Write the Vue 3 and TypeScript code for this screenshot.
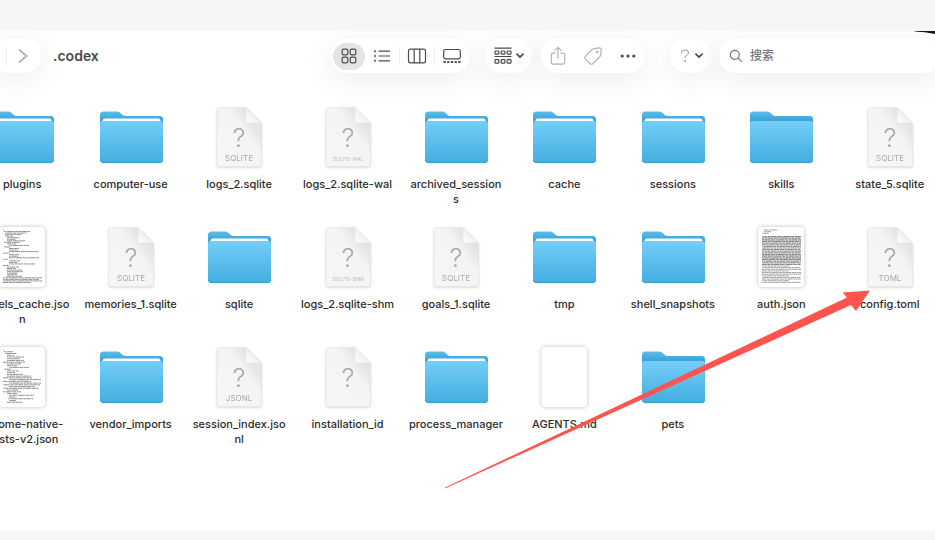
<script setup lang="ts">
import { ref } from 'vue'

type Kind = 'folder' | 'empty-folder' | 'unknown' | 'text'

interface Entry {
  lines: string[]
  kind: Kind
  tag?: string
  preview?: 'tree' | 'list' | 'dense'
}

interface Stroke {
  x: number
  y: number
  w: number
  heavy: boolean
}

const entries: Entry[] = [
  { lines: ['plugins'], kind: 'folder' },
  { lines: ['computer-use'], kind: 'folder' },
  { lines: ['logs_2.sqlite'], kind: 'unknown', tag: 'SQLITE' },
  { lines: ['logs_2.sqlite-wal'], kind: 'unknown', tag: 'SQLITE-WAL' },
  { lines: ['archived_session', 's'], kind: 'folder' },
  { lines: ['cache'], kind: 'folder' },
  { lines: ['sessions'], kind: 'folder' },
  { lines: ['skills'], kind: 'empty-folder' },
  { lines: ['state_5.sqlite'], kind: 'unknown', tag: 'SQLITE' },
  { lines: ['models_cache.jso', 'n'], kind: 'text', preview: 'tree' },
  { lines: ['memories_1.sqlite'], kind: 'unknown', tag: 'SQLITE' },
  { lines: ['sqlite'], kind: 'folder' },
  { lines: ['logs_2.sqlite-shm'], kind: 'unknown', tag: 'SQLITE-SHM' },
  { lines: ['goals_1.sqlite'], kind: 'unknown', tag: 'SQLITE' },
  { lines: ['tmp'], kind: 'folder' },
  { lines: ['shell_snapshots'], kind: 'folder' },
  { lines: ['auth.json'], kind: 'text', preview: 'dense' },
  { lines: ['config.toml'], kind: 'unknown', tag: 'TOML' },
  { lines: ['chrome-native-', 'hosts-v2.json'], kind: 'text', preview: 'list' },
  { lines: ['vendor_imports'], kind: 'folder' },
  { lines: ['session_index.jso', 'nl'], kind: 'unknown', tag: 'JSONL' },
  { lines: ['installation_id'], kind: 'unknown' },
  { lines: ['process_manager'], kind: 'folder' },
  { lines: ['AGENTS.md'], kind: 'text' },
  { lines: ['pets'], kind: 'empty-folder' },
]

/* Each pair is the indent and the length of one line of the thumbnail. */
const treeLines = [
  [0, 1], [1, 26], [2, 22], [2, 16], [2, 8], [4, 13], [4, 9], [4, 18], [1, 16], [4, 9], [6, 20],
  [1, 6], [6, 10], [6, 9], [6, 29], [0, 6], [6, 10], [6, 9], [6, 30], [0, 5], [6, 11], [6, 8],
  [6, 26], [0, 6], [4, 12], [4, 9], [4, 15], [4, 16], [4, 11], [4, 10], [4, 15], [0, 39], [0, 36],
  [0, 39], [0, 28],
]
const listLines = [
  [0, 1], [1, 9], [2, 12], [4, 7], [4, 17], [4, 13], [4, 17], [0, 22], [4, 14], [4, 10], [6, 20],
  [1, 7], [4, 12], [4, 8], [4, 16], [4, 24], [0, 29], [6, 32], [0, 28], [6, 32], [0, 37], [6, 26],
  [0, 36], [4, 12], [0, 18], [4, 10], [6, 25], [6, 7], [5, 25], [6, 7], [4, 15],
]
const denseLines = Array.from({ length: 33 }, (_, i) => {
  if (i === 0) return [2, 13]
  if (i === 1) return [2, 7]
  if (i === 2 || i === 3) return [0, i === 2 ? 7 : 0]
  return [0, [22, 25, 28, 31].includes(i) ? 27 : 39]
})

const previews = { tree: treeLines, list: listLines, dense: denseLines }

function strokesFor(entry: Entry): Stroke[] {
  if (!entry.preview) return []
  const rows = previews[entry.preview]
  const step = 54 / rows.length
  return rows.map(([indent, length], i) => ({
    x: 17 + indent,
    y: 5 + i * step,
    w: length,
    heavy: entry.preview === 'dense' && i > 3 && i < 22,
  }))
}

const view = ref('icons')
const query = ref('')
</script>

<template>
  <main class="window">
    <svg class="corner" viewBox="0 0 22 3" aria-hidden="true">
      <path d="M0 .5Q12 .4 22 3V0H4Z" fill="#151515" />
    </svg>

    <header class="toolbar">
      <nav class="pill nav" aria-label="History">
        <span class="divider"></span>
        <button type="button" class="tool forward" aria-label="Forward">
          <svg width="10" height="14" viewBox="0 0 10 14"><path d="m1.5 1 7 6-7 6" class="faint wide" /></svg>
        </button>
      </nav>
      <h1 class="title">.codex</h1>

      <div class="pill views" role="group" aria-label="View">
        <button type="button" class="tool" :class="{ active: view === 'icons' }" aria-label="Icons" @click="view = 'icons'">
          <svg width="16" height="16" viewBox="0 0 16 16" class="dark">
            <rect x="1.2" y="1.2" width="5.6" height="5.6" rx="1.2" /><rect x="9.2" y="1.2" width="5.6" height="5.6" rx="1.2" />
            <rect x="1.2" y="9.2" width="5.6" height="5.6" rx="1.2" /><rect x="9.2" y="9.2" width="5.6" height="5.6" rx="1.2" />
          </svg>
        </button>
        <button type="button" class="tool" :class="{ active: view === 'list' }" aria-label="List" @click="view = 'list'">
          <svg width="18" height="14" viewBox="0 0 18 14" class="dark">
            <path d="M5.5 2.2H17M5.5 7H17M5.5 11.8H17" />
            <g class="solid"><circle cx="2" cy="2.2" r="1" /><circle cx="2" cy="7" r="1" /><circle cx="2" cy="11.8" r="1" /></g>
          </svg>
        </button>
        <span class="divider"></span>
        <button type="button" class="tool" :class="{ active: view === 'columns' }" aria-label="Columns" @click="view = 'columns'">
          <svg width="20" height="16" viewBox="0 0 20 16" class="dark">
            <rect x="1.5" y="1.2" width="17" height="13.6" rx="2" /><path d="M7.2 1.2v13.6M12.8 1.2v13.6" />
          </svg>
        </button>
        <span class="divider"></span>
        <button type="button" class="tool" :class="{ active: view === 'gallery' }" aria-label="Gallery" @click="view = 'gallery'">
          <svg width="20" height="16" viewBox="0 0 20 16" class="dark">
            <rect x="1.7" y="1.5" width="16.6" height="9.4" rx="1.8" />
            <path d="M1.5 14h17" stroke-width="2" stroke-dasharray="2.2 1.5" />
          </svg>
        </button>
      </div>

      <button type="button" class="pill group" aria-label="Group by">
        <svg width="18" height="18" viewBox="0 0 18 18" class="dark">
          <path d="M.5 1.2h17M.5 9.5h17" />
          <rect x="1" y="4" width="3.8" height="3.2" rx=".7" /><rect x="7.1" y="4" width="3.8" height="3.2" rx=".7" /><rect x="13.2" y="4" width="3.8" height="3.2" rx=".7" />
          <rect x="1" y="12.6" width="3.8" height="3.6" rx=".7" /><rect x="7.1" y="12.6" width="3.8" height="3.6" rx=".7" /><rect x="13.2" y="12.6" width="3.8" height="3.6" rx=".7" />
        </svg>
        <svg width="8" height="6" viewBox="0 0 8 6" class="dark"><path d="m1 1.2 3 3 3-3" class="wide" /></svg>
      </button>

      <div class="pill actions">
        <button type="button" class="tool" aria-label="Share">
          <svg width="16" height="20" viewBox="0 0 16 20" class="faint">
            <path d="M5 7.2H3.2A1.9 1.9 0 0 0 1.3 9v7.2a2 2 0 0 0 1.9 1.9h9.6a2 2 0 0 0 1.9-1.9V9a1.9 1.9 0 0 0-1.9-1.8H11M8 12.5V1.6M4.8 4.6 8 1.4l3.2 3.2" />
          </svg>
        </button>
        <button type="button" class="tool" aria-label="Tags">
          <svg width="20" height="20" viewBox="0 0 20 20" class="faint">
            <path d="M10.6 2.8 16 1.9q2.2-.2 2.3 2l-.7 5.3q-.1.8-.7 1.4l-7.2 7.2q-1.2 1-2.4 0l-5.1-5.1q-1.1-1.2 0-2.4l7-7Q9.800 2.800 10.600 2.800Z" />
            <circle cx="14.2" cy="6" r=".7" />
          </svg>
        </button>
        <button type="button" class="tool" aria-label="More">
          <svg width="16" height="4" viewBox="0 0 16 4" class="dark"><g class="solid"><circle cx="2.2" cy="2" r="1.6" /><circle cx="8" cy="2" r="1.6" /><circle cx="13.8" cy="2" r="1.6" /></g></svg>
        </button>
      </div>

      <button type="button" class="pill help" aria-label="Help">
        <svg width="10" height="14" viewBox="0 0 10 14" class="faint"><path d="M1.5 4.1Q1.6 1.2 5 1.2t3.5 2.7c0 2-3.5 2.600-3.500 5" /><circle cx="5" cy="12.2" r=".5" /></svg>
        <svg width="8" height="6" viewBox="0 0 8 6" class="dark"><path d="m1 1.2 3 3 3-3" class="wide" /></svg>
      </button>

      <label class="pill search">
        <svg width="14" height="14" viewBox="0 0 14 14" class="grey"><circle cx="5.8" cy="5.8" r="4.5" /><path d="m9.2 9.2 3.500 3.500" /></svg>
        <input v-model="query" type="search" placeholder="搜索" aria-label="搜索" />
      </label>
    </header>

    <svg class="defs" width="0" height="0" aria-hidden="true">
      <defs>
        <linearGradient id="folder-front" x2="0" y2="1"><stop stop-color="#74cef8" /><stop offset="1" stop-color="#43ade0" /></linearGradient>
        <linearGradient id="folder-back" x2="0" y2="1"><stop stop-color="#5bbdea" /><stop offset=".25" stop-color="#3ba5da" /></linearGradient>
        <linearGradient id="sheet" x1="0" y1="1" x2="1" y2="0"><stop stop-color="#f6f6f6" /><stop offset=".6" stop-color="#f4f4f4" /><stop offset=".78" stop-color="#e4e4e4" /></linearGradient>
        <linearGradient id="fold" x1="0" y1="1" x2="1" y2="0"><stop stop-color="#fff" /><stop offset=".5" stop-color="#f0f0f0" /></linearGradient>
      </defs>
    </svg>

    <ul class="files">
      <li v-for="entry in entries" :key="entry.lines.join('')">
        <button type="button" class="file">
          <svg v-if="entry.kind === 'folder' || entry.kind === 'empty-folder'" class="icon" viewBox="0 0 72 64" aria-hidden="true">
            <path d="M5 10q0-3.500 3.500-3.500h13.500q2 0 3.300 1.200l2.400 2.200q1.200 1.100 3 1.100h34q3.300 0 3.300 3.300V40h-63Z" fill="url(#folder-back)" />
            <path v-if="entry.kind === 'folder'" d="M7.500 19v-3q0-2.500 2.500-2.500h53q2.500 0 2.500 2.500v3Z" fill="#fff" />
            <path d="M5 19q0-3 3-3h57q3 0 3 3v35.500q0 3.500-3.500 3.500H8.500q-3.500 0-3.500-3.500Z" fill="url(#folder-front)" />
            <path d="M5.500 55q.3 2.700 3 2.700h56q2.700 0 3-2.700" class="folder-rim" />
          </svg>

          <svg v-else-if="entry.kind === 'unknown'" class="icon sheet" viewBox="0 0 72 64" aria-hidden="true">
            <path d="M16 2.500h27L58.500 18v42q0 1.500-1.500 1.500H15.500Q14 61.500 14 60V4.500q0-2 2-2Z" fill="url(#sheet)" class="sheet-edge" />
            <path d="M43 2.500 58.500 18H44.500Q43 18 43 16.500Z" fill="url(#fold)" class="sheet-edge" />
            <text x="36" y="42" class="mark">?</text>
            <text v-if="entry.tag" x="36" y="56" class="tag" :class="{ tiny: entry.tag.length > 6 }">{{ entry.tag }}</text>
          </svg>

          <svg v-else class="icon paper" viewBox="0 0 72 64" aria-hidden="true">
            <rect x="13.500" y="2" width="45.500" height="60" rx="4" fill="#fff" />
            <path
              v-for="(s, i) in strokesFor(entry)"
              :key="i"
              :d="`M${s.x} ${s.y}h${s.w}`"
              class="script"
              :class="{ heavy: s.heavy, compact: entry.preview === 'dense' }"
              :stroke-dashoffset="i * 3"
            />
          </svg>

          <span class="name"><span v-for="line in entry.lines" :key="line">{{ line }}</span></span>
        </button>
      </li>
    </ul>

    <svg class="arrow" width="430" height="200" viewBox="0 0 430 200" aria-hidden="true">
      <path d="M0 197.500 402 7.500 397.500 2.500 425 .5 411 21 406 15 0 198.500Z" fill="#ff5350" />
    </svg>
  </main>
</template>

<style>
body {
  margin: 0;
  background: #f6f6f6;
}
</style>

<style scoped>
.window {
  box-sizing: border-box;
  position: relative;
  min-height: calc(100vh - 40px);
  margin-top: 31px;
  margin-bottom: 9px;
  padding-bottom: 40px;
  overflow: hidden;
  background: #fff;
  color: #2c2c2c;
  font-family: Inter, "Noto Sans CJK SC", sans-serif;
}

.corner {
  position: absolute;
  top: 0;
  right: 0;
  width: 22px;
  height: 3px;
}

.toolbar {
  display: flex;
  align-items: center;
  height: 50px;
  padding-bottom: 24px;
}

button {
  padding: 0;
  border: 0;
  background: none;
  color: inherit;
  font: inherit;
}

.pill {
  display: flex;
  flex-shrink: 0;
  align-items: center;
  box-sizing: border-box;
  height: 34px;
  border-radius: 17px;
  background: #fff;
  box-shadow: 0 6px 30px rgba(0, 0, 0, 0.08);
}

.nav {
  width: 49px;
  margin-left: -8px;
  padding-left: 14px;
}

.divider {
  flex-shrink: 0;
  width: 1px;
  height: 18px;
  background: #eee;
}

.tool {
  display: flex;
  flex-shrink: 0;
  align-items: center;
  justify-content: center;
  width: 32px;
  height: 27px;
  border-radius: 14px;
}

.tool.active {
  background: #e4e4e4;
}

.title {
  flex: 1;
  margin: 0 12px;
  color: #4a4a4a;
  font-size: 14px;
  font-weight: 600;
  line-height: 20px;
}

.views {
  gap: 1px;
  width: 140px;
  margin-right: 15px;
  padding: 0 3px;
}

.group {
  gap: 4px;
  justify-content: center;
  width: 47px;
  margin-right: 9px;
}

.actions {
  justify-content: space-between;
  width: 104px;
  margin-right: 25px;
  padding: 0 1px;
}

.help {
  gap: 5px;
  justify-content: center;
  width: 42px;
  margin-right: 7px;
}

.search {
  gap: 7px;
  width: 222px;
  margin-right: -6px;
  padding: 0 10px;
}

.search input {
  flex: 1;
  min-width: 0;
  padding: 0;
  border: 0;
  outline: 0;
  background: none;
  color: #4a4a4a;
  font: 500 12px/16px Inter, "Noto Sans CJK SC", sans-serif;
}

.search input::placeholder {
  color: #777;
  opacity: 1;
}

.pill svg {
  flex-shrink: 0;
  fill: none;
  stroke-width: 1.2;
  stroke-linejoin: round;
}

.dark {
  stroke: #4b4b4b;
}

.grey {
  stroke: #777;
  stroke-linecap: round;
}

.faint {
  stroke: #b2b2b2;
  stroke-linecap: round;
}

.wide {
  stroke-width: 1.7;
  stroke-linecap: round;
}

.solid {
  fill: #4b4b4b;
  stroke: none;
}

.defs {
  position: absolute;
}

.files {
  display: grid;
  grid-template-columns: repeat(9, minmax(0, 1fr));
  grid-auto-rows: 120px;
  margin: 0 -9px 0 -32px;
  padding: 0;
  list-style: none;
}

.file {
  display: flex;
  flex-direction: column;
  align-items: center;
  width: 100%;
}

.icon {
  width: 72px;
  height: 64px;
  overflow: visible;
}

.folder-rim {
  fill: none;
  stroke: #3599cb;
  stroke-width: 0.7;
}

.sheet {
  filter: drop-shadow(0 1px 1px rgba(0, 0, 0, 0.16));
}

.paper {
  filter: drop-shadow(0 0 2px rgba(0, 0, 0, 0.26));
}

.sheet-edge {
  stroke: #e2e2e2;
  stroke-width: 0.5;
}

.mark,
.tag {
  fill: #aaa;
  font-family: Inter, sans-serif;
  text-anchor: middle;
}

.mark {
  font-size: 26px;
  font-weight: 300;
}

.tag {
  font-size: 8px;
}

.tag.tiny {
  fill: #bbb;
  font-size: 5px;
}

.script {
  fill: none;
  stroke: #777;
  stroke-width: 0.8;
  stroke-dasharray: 4 0.5 2 0.4 6 0.6;
}

.script.compact {
  stroke: #999;
  stroke-width: 0.9;
}

.script.heavy {
  stroke: #8a8a8a;
  stroke-width: 1.2;
}

.name {
  display: flex;
  flex-direction: column;
  margin-top: 8px;
  font-size: 11px;
  font-weight: 500;
  line-height: 15px;
  white-space: nowrap;
}

.arrow {
  position: absolute;
  top: 259px;
  left: 445px;
  pointer-events: none;
}
</style>
